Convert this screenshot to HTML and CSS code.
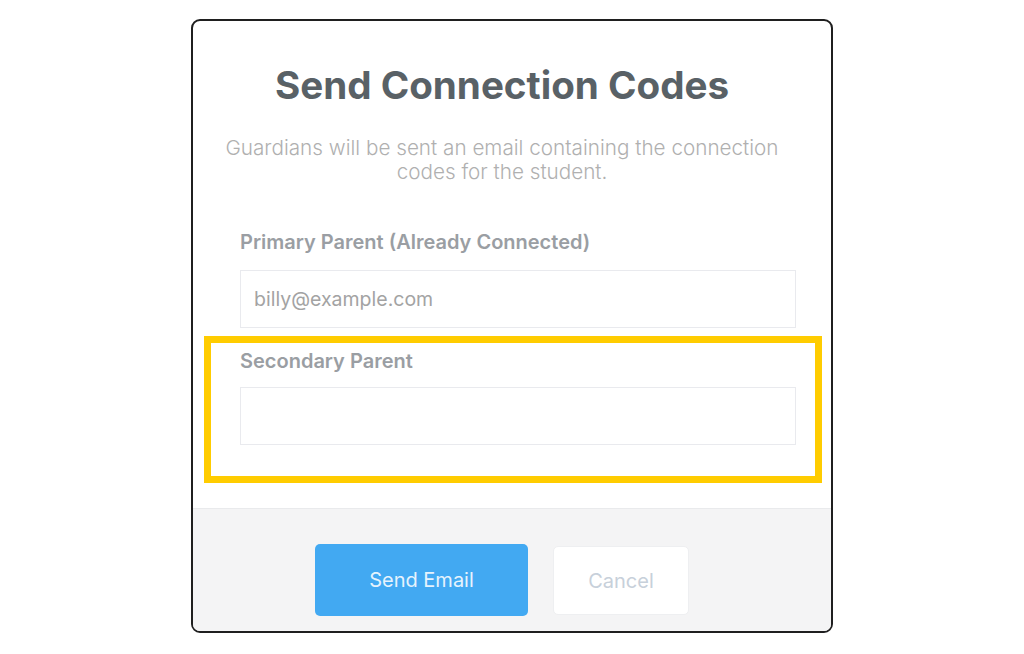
FILE: index.html
```html
<!DOCTYPE html>
<html lang="en">
<head>
<meta charset="utf-8">
<title>Send Connection Codes</title>
<link rel="stylesheet" href="styles.css">
</head>
<body>
<div class="modal">
  <div class="modal-body">
    <div class="header">
      <h1 class="title">Send Connection Codes</h1>
      <p class="subtitle">Guardians will be sent an email containing the connection codes for the student.</p>
    </div>
    <div class="form">
      <div class="field">
        <label class="label">Primary Parent (Already Connected)</label>
        <div class="input">billy@example.com</div>
      </div>
      <div class="field field-secondary">
        <label class="label">Secondary Parent</label>
        <div class="input"></div>
        <div class="highlight"></div>
      </div>
    </div>
  </div>
  <div class="footer">
    <button class="btn btn-primary">Send Email</button>
    <button class="btn btn-cancel">Cancel</button>
  </div>
</div>
</body>
</html>
```

FILE: styles.css
```css
html, body {
  margin: 0;
  padding: 0;
  background: #ffffff;
}
body {
  font-family: Inter, "Noto Sans", sans-serif;
  padding-top: 19px;
  padding-left: 191px;
  height: 654px;
  box-sizing: border-box;
}
.modal {
  width: 642px;
  height: 614px;
  box-sizing: border-box;
  border: 2px solid #1f1f1f;
  border-radius: 9px;
  overflow: hidden;
  display: flex;
  flex-direction: column;
  background: #ffffff;
}
.modal-body {
  flex: 0 0 auto;
  height: 488px;
  border-bottom: 1px solid #e9eaec;
  box-sizing: border-box;
}
.header {
  padding: 42px 40px 0 20px;
  text-align: center;
}
.title {
  margin: 0;
  font-size: 38.6px;
  line-height: 45px;
  font-weight: 700;
  color: #596166;
  letter-spacing: 0;
}
.subtitle {
  margin: 28px auto 0;
  max-width: 575px;
  font-size: 20.7px;
  line-height: 24px;
  font-weight: 300;
  color: #b0b0b0;
}
.form {
  padding: 0 0 0 47px;
}
.field {
  position: relative;
  width: 556px;
}
.label {
  display: block;
  font-size: 20px;
  line-height: 22px;
  font-weight: 600;
  color: #9a9ea3;
}
.field:first-child .label {
  margin-top: 47px;
}
.field-secondary .label {
  margin-top: 22px;
}
.input {
  margin-top: 17px;
  height: 58px;
  box-sizing: border-box;
  border: 1.5px solid #e9eaee;
  padding: 0 13px;
  display: flex;
  align-items: center;
  font-size: 19.5px;
  color: #a3a3a3;
  font-weight: 400;
}
.field-secondary .input {
  margin-top: 15px;
}
.highlight {
  position: absolute;
  left: -36px;
  top: -14px;
  width: 618px;
  height: 147px;
  box-sizing: border-box;
  border: 7px solid #ffcc00;
  pointer-events: none;
}
.footer {
  flex: 1 1 auto;
  background: #f4f4f5;
  display: flex;
  justify-content: center;
  align-items: flex-start;
  gap: 25px;
  padding: 35px 20px 0 0;
}
.btn {
  font-family: Inter, "Noto Sans", sans-serif;
  font-size: 20px;
  border-radius: 5px;
  border: none;
  cursor: pointer;
}
.btn-primary {
  width: 213px;
  height: 72px;
  background: #42a9f2;
  color: #e6f3fd;
}
.btn-cancel {
  margin-top: 2px;
  width: 136px;
  height: 69px;
  background: #ffffff;
  color: #c7d0da;
  border: 1px solid #eeeff1;
}
```
